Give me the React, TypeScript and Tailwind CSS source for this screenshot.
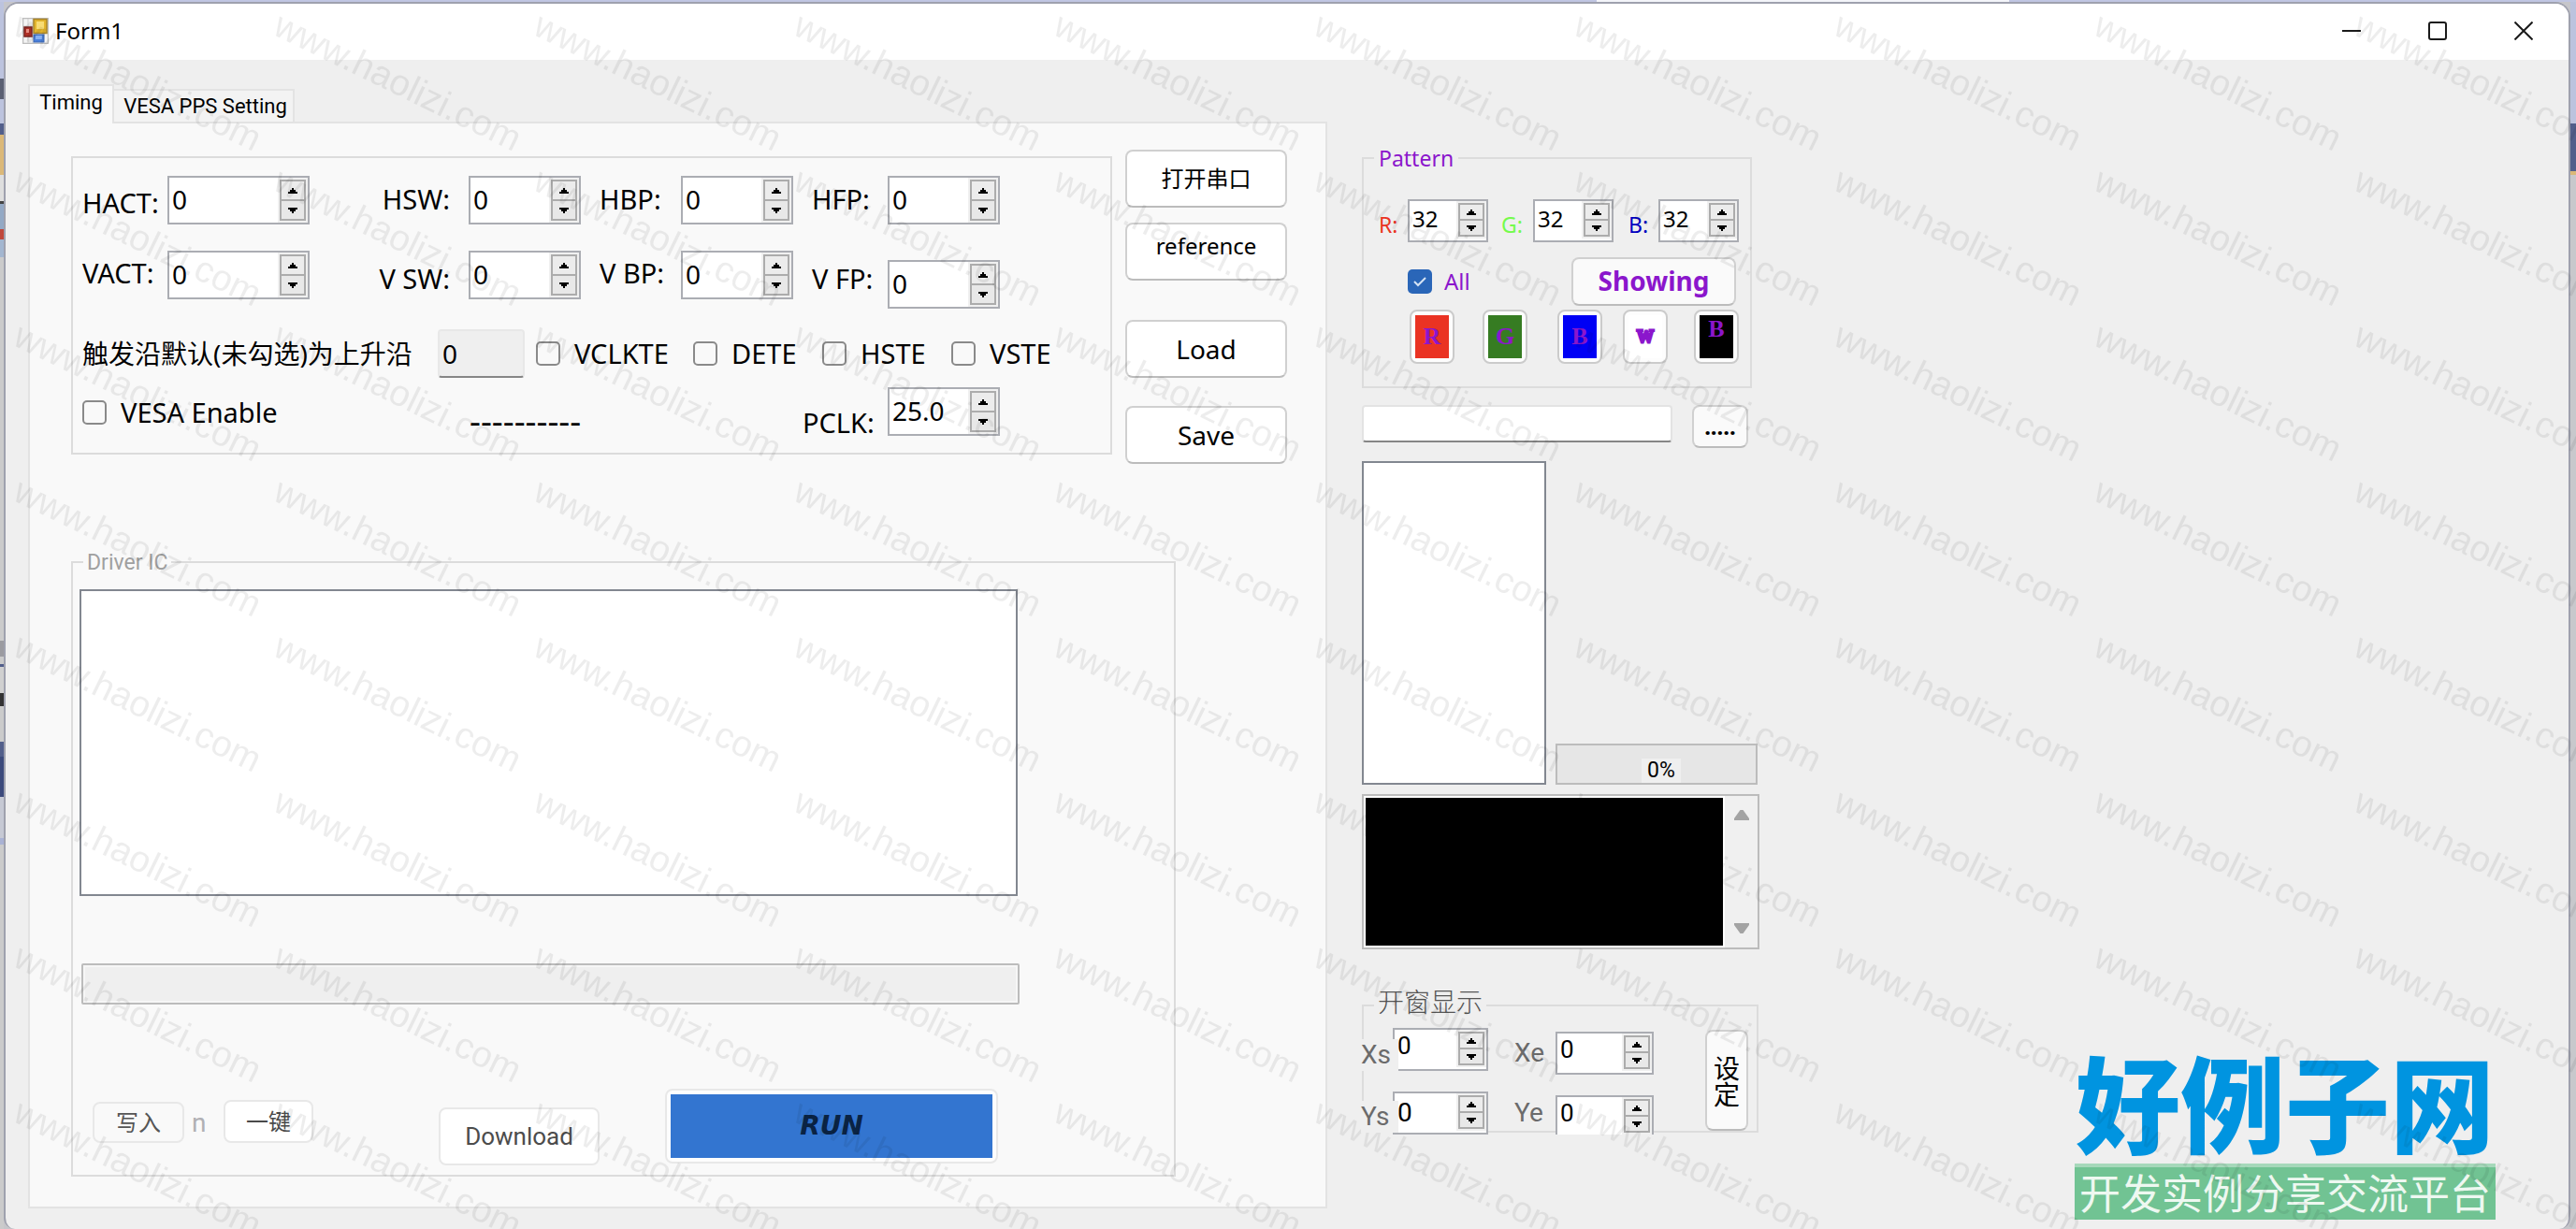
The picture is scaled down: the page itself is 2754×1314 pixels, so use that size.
import React from "react";

const FORM_FONT = "font-['Noto_Sans','Noto_Sans_CJK_SC',sans-serif]";

function Arrow({ down }: { down?: boolean }) {
  return (
    <svg viewBox="0 0 10 6" className="h-[6px] w-[10px]" aria-hidden="true" shapeRendering="crispEdges">
      <path d={down ? "M0 0h10v2h-2v2h-2v2h-2v-2h-2v-2h-2z" : "M0 6h10v-2h-2v-2h-2v-2h-2v2h-2v2h-2z"} fill="#000" />
    </svg>
  );
}

function Spinner({
  id,
  value,
  small,
  className,
  inputClass,
}: {
  id: string;
  value: string;
  small?: boolean;
  className: string;
  inputClass?: string;
}) {
  return (
    <div
      className={`flex shrink-0 border-2 border-[#abadb3] bg-white ${small ? "h-[46px]" : "h-[52px]"} ${className}`}
    >
      <input
        id={id}
        type="text"
        defaultValue={value}
        className={`w-0 min-w-0 flex-1 bg-transparent pl-[3px] text-black outline-none ${
          inputClass ?? (small ? "pb-1 text-[24px]" : "pb-0.5 text-[28px]")
        }`}
      />
      <div className={`flex w-8 shrink-0 flex-col bg-[#f0f0f0] px-0.5 pt-0.5 pb-0.5 ${small ? "mb-0.5" : ""}`}>
        <button
          type="button"
          aria-label={`${id} up`}
          className="flex flex-1 items-center justify-center border-2 border-[#acacac] bg-[#ececec]"
        >
          <Arrow />
        </button>
        <button
          type="button"
          aria-label={`${id} down`}
          className="flex flex-1 items-center justify-center border-2 border-t-0 border-[#acacac] bg-[#e8e8e8]"
        >
          <Arrow down />
        </button>
      </div>
    </div>
  );
}

function Label({ htmlFor, children }: { htmlFor: string; children: React.ReactNode }) {
  return (
    <label htmlFor={htmlFor} className="text-[29px] leading-10 whitespace-nowrap">
      {children}
    </label>
  );
}

function Check({ id, label, className }: { id: string; label: string; className?: string }) {
  return (
    <div className={`flex items-center gap-[15px] ${className ?? ""}`}>
      <input
        id={id}
        type="checkbox"
        className="size-[26px] shrink-0 appearance-none rounded-[5px] border-2 border-[#8a8a8a] bg-[#f9f9f9]"
      />
      <Label htmlFor={id}>{label}</Label>
    </div>
  );
}

function PushButton({ className, children }: { className: string; children: React.ReactNode }) {
  return (
    <button
      type="button"
      className={`flex shrink-0 items-center justify-center rounded-lg border-2 border-[#d0d0d0] border-b-[#bcbcbc] ${className}`}
    >
      {children}
    </button>
  );
}

function Swatch({
  label,
  color,
  className,
  textClass,
}: {
  label: string;
  color: string;
  className?: string;
  textClass?: string;
}) {
  return (
    <button
      type="button"
      className={`flex h-[58px] w-12 shrink-0 rounded-lg border-2 border-[#cbcbcb] bg-[#fdfdfd] p-1 ${className ?? ""}`}
    >
      <span
        className={`flex flex-1 justify-center self-stretch overflow-hidden font-['Liberation_Serif',serif] leading-[30px] font-bold text-[#8b16cc] ${color} ${
          textClass ?? "items-center text-[26px]"
        }`}
      >
        {label}
      </span>
    </button>
  );
}

function FormIcon() {
  return (
    <svg viewBox="0 0 28 28" className="size-7" aria-hidden="true">
      <rect x="0.5" y="0.5" width="27" height="27" fill="#f4f4f4" stroke="#bdbdbd" strokeWidth="1.5" />
      <path d="M11 1v26M1 9h10M1 20h10M6 20v7M6 1v8" stroke="#cfcfcf" strokeWidth="1" />
      <rect x="12" y="1.5" width="14" height="15" fill="#e3b52d" stroke="#a8842a" strokeWidth="1.5" />
      <rect x="15" y="4" width="8" height="8" fill="#f8dc75" />
      <rect x="2" y="10" width="8" height="10" fill="#b02f26" stroke="#7c2420" strokeWidth="1.5" />
      <rect x="4" y="12" width="3" height="4" fill="#e58b80" />
      <rect x="12" y="18" width="11" height="8" fill="#4a80dc" stroke="#3d66b0" strokeWidth="1" />
      <rect x="14" y="19" width="7" height="4" fill="#86b0f2" />
    </svg>
  );
}

function Watermark() {
  return (
    <svg className="pointer-events-none absolute inset-0 h-full w-full" aria-hidden="true">
      <defs>
        <pattern id="wm" width="278" height="166" patternUnits="userSpaceOnUse">
          <text
            x="12"
            y="36"
            transform="rotate(26 12 36)"
            fontSize="39"
            fill="#000"
            fillOpacity="0.07"
            className="font-['Liberation_Sans',Arial,sans-serif]"
          >
            www.haolizi.com
          </text>
        </pattern>
      </defs>
      <rect width="100%" height="100%" fill="url(#wm)" />
    </svg>
  );
}

function TimingGroup() {
  return (
    <section className="mt-[7px] w-[1113px] shrink-0 border-2 border-[#dcdcdc] pt-[19px] pb-3 pl-[10px]">
      <div className="flex items-start">
        <div className="flex w-[91px] flex-col gap-[35px] pt-[9px]">
          <Label htmlFor="hact">HACT:</Label>
          <Label htmlFor="vact">VACT:</Label>
        </div>
        <div className="flex flex-col gap-7">
          <Spinner id="hact" value="0" className="w-[152px]" />
          <Spinner id="vact" value="0" className="w-[152px]" />
        </div>
        <div className="flex w-[170px] flex-col gap-[45px] pt-[5px] pr-5 text-right">
          <Label htmlFor="hsw">HSW:</Label>
          <Label htmlFor="vsw">V SW:</Label>
        </div>
        <div className="flex flex-col gap-7">
          <Spinner id="hsw" value="0" className="w-[120px]" />
          <Spinner id="vsw" value="0" className="w-[120px]" />
        </div>
        <div className="flex w-[107px] flex-col gap-[39px] pt-[5px] pl-5">
          <Label htmlFor="hbp">HBP:</Label>
          <Label htmlFor="vbp">V BP:</Label>
        </div>
        <div className="flex flex-col gap-7">
          <Spinner id="hbp" value="0" className="w-[120px]" />
          <Spinner id="vbp" value="0" className="w-[120px]" />
        </div>
        <div className="flex w-[101px] flex-col gap-[45px] pt-[5px] pl-5">
          <Label htmlFor="hfp">HFP:</Label>
          <Label htmlFor="vfp">V FP:</Label>
        </div>
        <div className="flex flex-col gap-[38px]">
          <Spinner id="hfp" value="0" className="w-[120px]" />
          <Spinner id="vfp" value="0" className="w-[120px]" />
        </div>
      </div>

      <div className="mt-[22px] flex items-center">
        <label htmlFor="edge" className="w-[380px] text-[28px] leading-10 whitespace-nowrap">
          触发沿默认(未勾选)为上升沿
        </label>
        <input
          id="edge"
          type="text"
          readOnly
          value="0"
          className="h-[52px] w-[93px] rounded-sm border-2 border-[#e8e8e8] border-b-[#868686] bg-[#efefef] pl-[3px] text-[28px] outline-none"
        />
        <Check id="vclkte" label="VCLKTE" className="ml-3 w-[168px]" />
        <Check id="dete" label="DETE" className="w-[138px]" />
        <Check id="hste" label="HSTE" className="w-[138px]" />
        <Check id="vste" label="VSTE" />
      </div>

      <div className="mt-[10px] flex items-start">
        <Check id="vesa" label="VESA Enable" className="w-[414px] pt-[7px]" />
        <span className="w-[356px] pt-[15px] text-[37px] leading-10">----------</span>
        <div className="w-[91px] pt-[18px] leading-[0]">
          <Label htmlFor="pclk">PCLK:</Label>
        </div>
        <Spinner id="pclk" value="25.0" className="w-[120px]" />
      </div>
    </section>
  );
}

function DriverGroup() {
  return (
    <fieldset className="mt-[89px] w-[1181px] border-2 border-[#dcdcdc] pb-[10px] pl-[7px]">
      <legend className="ml-1 px-1 pt-0.5 font-['Roboto',sans-serif] text-[23px] leading-[30px] text-[#a0a0a0]">
        Driver IC
      </legend>
      <div
        role="listbox"
        aria-label="Driver IC log"
        className="mt-[13px] h-[328px] w-[1003px] border-2 border-[#828790] bg-white"
      />
      <div
        role="progressbar"
        aria-label="Driver IC progress"
        aria-valuenow={0}
        className="mt-[72px] ml-0.5 h-11 w-[1003px] rounded-xs border-2 border-[#bcbcbc] bg-[#efefef] ring-2 ring-[#f6f6f6] ring-inset"
      />
      <div className="mt-[90px] flex items-start pl-[14px]">
        <PushButton className="mt-[14px] h-11 w-[98px] border-[#e8e8e8]! text-[24px] leading-8 text-[#555]">写入</PushButton>
        <span className="mt-[16px] w-[42px] pl-2 font-['Roboto',sans-serif] text-[28px] leading-[42px] text-[#b0b0b4]">n</span>
        <PushButton className="mt-3 h-[46px] w-24 border-[#e8e8e8]! bg-white text-[24px] leading-8 text-[#4a4a4a]">
          一键
        </PushButton>
        <PushButton className="mt-5 ml-[134px] h-[62px] w-[172px] border-[#e8e8e8]! bg-white font-['Roboto',sans-serif] text-[26px] text-[#4c4c4c]">
          Download
        </PushButton>
        <button type="button" className="ml-[70px] flex h-20 w-[356px] rounded-lg border-2 border-[#e8e8e8] bg-[#fdfdfd] p-1">
          <span className="flex flex-1 items-center justify-center self-stretch bg-[#3375d0] font-['DejaVu_Sans',sans-serif] text-[28px] font-bold text-[#0a2344] italic">
            RUN
          </span>
        </button>
      </div>
    </fieldset>
  );
}

function PatternGroup() {
  return (
    <fieldset className="w-[417px] border-2 border-[#dcdcdc] pb-6">
      <legend className="ml-[11px] px-[5px] text-[23px] leading-8 text-[#8b16cc]">Pattern</legend>
      <div className="flex items-start pt-7 pl-4 text-[23px] leading-8">
        <label htmlFor="r" className="w-[31px] pt-[11px] text-[#ea3323]">R:</label>
        <Spinner id="r" value="32" small className="w-[86px]" />
        <label htmlFor="g" className="w-12 pt-[11px] pl-[14px] text-[#75fb4c]">G:</label>
        <Spinner id="g" value="32" small className="w-[86px]" />
        <label htmlFor="b" className="w-12 pt-[11px] pl-4 text-[#0000c0]">B:</label>
        <Spinner id="b" value="32" small className="w-[86px]" />
      </div>
      <div className="mt-4 flex items-center pr-[15px] pl-[47px]">
        <span className="relative flex size-[26px]">
          <input id="all" type="checkbox" defaultChecked className="size-[26px] appearance-none rounded-[5px] bg-[#2a66b8]" />
          <svg viewBox="0 0 26 26" className="pointer-events-none absolute inset-0" aria-hidden="true">
            <path d="M7 13l4 4 8-8" fill="none" stroke="#d5e3f4" strokeWidth="2" />
          </svg>
        </span>
        <label htmlFor="all" className="pl-[13px] text-[24px] leading-8 text-[#8b16cc]">All</label>
        <PushButton className="ml-auto h-[52px] w-44 bg-[#fafafa] pb-0.5 text-[28px] leading-9 font-bold text-[#8b16cc]">
          Showing
        </PushButton>
      </div>
      <div className="mt-1 flex pl-[49px]">
        <Swatch label="R" color="bg-[#ea3323]" />
        <Swatch label="G" color="bg-[#367c22]" className="ml-[30px]" />
        <Swatch label="B" color="bg-[#0000f5]" className="ml-8" />
        <Swatch
          label="W"
          color="bg-white"
          className="ml-[22px]"
          textClass="items-center text-[18px] [-webkit-text-stroke:3px_#8b16cc]"
        />
        <Swatch label="B" color="bg-black" className="ml-7" textClass="items-start text-[26px]" />
      </div>
    </fieldset>
  );
}

function WindowGroup() {
  return (
    <fieldset className="mt-[38px] h-[158px] w-[424px] border-2 border-[#dcdcdc]">
      <legend className="ml-[11px] px-1 pb-2 text-[28px] leading-9 font-light text-[#555]">开窗显示</legend>
      <div className="-mt-1 -ml-[3px] flex items-start font-['Roboto',sans-serif] text-[28px] leading-[34px] text-[#6b6b6b]">
        <div className="z-10 -mr-[6px] flex w-10 flex-col gap-8 pt-[18px]">
          <label htmlFor="xs" className="bg-[#efefef]">Xs</label>
          <label htmlFor="ys" className="bg-[#efefef]">Ys</label>
        </div>
        <div className="flex flex-col gap-[22px] pt-[6px]">
          <Spinner id="xs" value="0" small className="w-[102px]" inputClass="pb-2 text-[26px]" />
          <Spinner id="ys" value="0" small className="w-[102px]" inputClass="text-[28px]" />
        </div>
        <div className="flex w-[72px] flex-col gap-[30px] pt-4 pl-7">
          <label htmlFor="xe">Xe</label>
          <label htmlFor="ye">Ye</label>
        </div>
        <div className="flex h-[120px] flex-col gap-[22px] overflow-hidden pt-[10px]">
          <Spinner id="xe" value="0" small className="w-[105px]" inputClass="pb-2 text-[26px]" />
          <Spinner id="ye" value="0" small className="w-[105px]" inputClass="pb-2 text-[26px]" />
        </div>
        <PushButton className="mt-2 ml-[55px] h-[108px] w-[46px] bg-[#fafafa] px-1 font-['Noto_Sans_CJK_SC',sans-serif] text-[28px] leading-7 text-black">
          <span className="w-7">设定</span>
        </PushButton>
      </div>
    </fieldset>
  );
}

function SidePanel() {
  return (
    <div className="ml-[37px] flex w-[425px] shrink-0 flex-col pt-[89px]">
      <PatternGroup />
      <div className="mt-[18px] flex items-start">
        <input
          type="text"
          aria-label="File path"
          className="h-10 w-[332px] rounded-sm border-2 border-[#e3e3e3] border-b-[#868686] bg-white px-1 text-[22px] outline-none"
        />
        <PushButton className="ml-[21px] h-[46px] w-[60px] bg-[#fafafa] text-[24px] leading-8 font-bold">.....</PushButton>
      </div>
      <div className="mt-[14px] flex items-end gap-[10px]">
        <div role="listbox" aria-label="Files" className="h-[346px] w-[197px] border-2 border-[#828790] bg-white" />
        <div
          role="progressbar"
          aria-label="Transfer progress"
          aria-valuenow={0}
          className="flex h-11 w-[216px] items-end justify-center border-2 border-[#bcbcbc] bg-[#e6e6e6] pl-[10px]"
        >
          <span className="bg-[#efefef] px-[6px] font-['Roboto',sans-serif] text-[23px] leading-[26px]">0%</span>
        </div>
      </div>
      <div className="mt-[10px] flex h-[166px] border-2 border-[#bcbcbc] bg-white p-0.5">
        <textarea aria-label="Console" className="min-w-0 flex-1 resize-none bg-black p-1 text-[22px] text-white outline-none" />
        <div className="-my-0.5 -mr-0.5 ml-0.5 flex w-[35px] flex-col items-center justify-between bg-[#f0f0f0] py-[14px]">
          <svg viewBox="0 0 16 12" className="h-3 w-4" aria-hidden="true">
            <path d="M6.5 1h3L16 10v2H0v-2z" fill="#a3a3a3" />
          </svg>
          <svg viewBox="0 0 16 12" className="h-3 w-4" aria-hidden="true">
            <path d="M6.5 11h3L16 2V0H0v2z" fill="#a3a3a3" />
          </svg>
        </div>
      </div>
      <WindowGroup />
    </div>
  );
}

function SiteLogo() {
  return (
    <div className="mr-[78px] mb-[10px] ml-auto flex w-[450px] flex-col self-end font-['Noto_Sans_CJK_SC',sans-serif]">
      <div className="pb-2 text-center text-[112px] leading-[120px] font-black whitespace-nowrap text-[#0094e0]">
        好例子网
      </div>
      <div className="border-t-4 border-[#a6d8ba] bg-[#71c393] pb-1 text-center text-[44px] leading-[52px] whitespace-nowrap text-[#eef8f1]">
        开发实例分享交流平台
      </div>
    </div>
  );
}

export default function App() {
  return (
    <div className={`relative flex min-h-screen flex-col overflow-hidden bg-[#c6c6ca] text-black ${FORM_FONT}`}>
      <div className="flex h-0.5 bg-[#c0c6e2]">
        <div className="ml-[62%] w-[16%] bg-[#f4f5fa]" />
      </div>
      <div className="flex flex-1">
        <div className="flex w-1 shrink-0 flex-col">
          <div className="h-[82px] bg-[#bcc3de]" />
          <div className="h-[22px] bg-[#5a5f72]" />
          <div className="h-[26px] bg-[#bcc3de]" />
          <div className="h-3 bg-[#525f8b]" />
          <div className="h-[43px] bg-[#dbb878]" />
          <div className="h-[28px] bg-[#dedede]" />
          <div className="h-[3px] bg-[#444]" />
          <div className="h-[27px] bg-[#93a9c5]" />
          <div className="h-[11px] bg-[#c0483c]" />
          <div className="h-[19px] bg-[#a3b6d0]" />
          <div className="h-[410px] bg-[#cbcbcb]" />
          <div className="h-[17px] bg-[#9b9ba0]" />
          <div className="h-2 bg-[#cbcbcb]" />
          <div className="h-[3px] bg-[#525f8b]" />
          <div className="h-7 bg-[#d0d0d0]" />
          <div className="h-[14px] bg-[#333]" />
          <div className="h-[38px] bg-[#cbcbcb]" />
          <div className="h-4 bg-[#525f8b]" />
          <div className="h-[43px] bg-[#3c4a7c]" />
          <div className="h-11 bg-[#c6c9d4]" />
          <div className="h-[7px] bg-[#a9b2d4]" />
          <div className="flex-1 bg-[#cbcbcb]" />
        </div>

        <main className="flex min-w-0 flex-1 flex-col overflow-hidden rounded-t-2xl rounded-b-xl border-2 border-b-0 border-[#9fa1ae] bg-[#efefef]">
          <header className="flex h-[60px] items-center bg-white pr-0.5 pb-0.5 pl-[18px]">
            <FormIcon />
            <h1 className="ml-[7px] text-[24px] leading-8">Form1</h1>
            <div className="ml-auto flex h-full text-[#1a1a1a]">
              <button type="button" aria-label="Minimize" className="flex w-[92px] items-center justify-center">
                <svg viewBox="0 0 20 20" className="size-5" aria-hidden="true">
                  <path d="M0 10h20" stroke="currentColor" strokeWidth="2" />
                </svg>
              </button>
              <button type="button" aria-label="Maximize" className="flex w-[92px] items-center justify-center">
                <svg viewBox="0 0 20 20" className="size-5" aria-hidden="true">
                  <rect x="1" y="1" width="18" height="18" rx="2" fill="none" stroke="currentColor" strokeWidth="2" />
                </svg>
              </button>
              <button type="button" aria-label="Close" className="flex w-[92px] items-center justify-center">
                <svg viewBox="0 0 20 20" className="size-5" aria-hidden="true">
                  <path d="M0.5 0.5l19 19M19.5 0.5l-19 19" stroke="currentColor" strokeWidth="2" />
                </svg>
              </button>
            </div>
          </header>

          <div className="flex flex-1 items-start pl-6">
            <div className="mb-[22px] flex w-[1389px] shrink-0 flex-col pt-[26px]">
              <div role="tablist" className="flex items-end font-['Roboto',sans-serif] text-[22px] leading-7">
                <button
                  type="button"
                  role="tab"
                  aria-selected="true"
                  className="z-10 -mb-0.5 h-[42px] w-[92px] border-2 border-b-0 border-[#e3e3e3] bg-[#f9f9f9] pb-1"
                >
                  Timing
                </button>
                <button
                  type="button"
                  role="tab"
                  aria-selected="false"
                  className="h-[35px] w-[193px] border-2 border-b-0 border-l-0 border-[#e3e3e3] bg-[#f3f3f3] pl-1 whitespace-nowrap"
                >
                  VESA PPS Setting
                </button>
              </div>
              <div role="tabpanel" className="border-2 border-[#e3e3e3] bg-[#f9f9f9] pt-7 pb-8 pl-11">
                <div className="flex items-start">
                  <TimingGroup />
                  <div className="ml-[14px] flex flex-col">
                    <PushButton className="h-[62px] w-[173px] bg-white text-[24px] leading-8">打开串口</PushButton>
                    <PushButton className="mt-4 h-[62px] w-[173px] bg-white pb-3 text-[24px] leading-8">reference</PushButton>
                    <PushButton className="mt-[42px] h-[62px] w-[173px] bg-white text-[28px] leading-9">Load</PushButton>
                    <PushButton className="mt-[30px] h-[62px] w-[173px] bg-white text-[28px] leading-9">Save</PushButton>
                  </div>
                </div>
                <DriverGroup />
              </div>
            </div>
            <SidePanel />
            <SiteLogo />
          </div>
        </main>

        <div className="flex w-1.5 shrink-0 flex-col">
          <div className="h-[130px] bg-[#bcc3de]" />
          <div className="h-[51px] bg-[#525f8b]" />
          <div className="h-1 bg-[#dbb878]" />
          <div className="flex-1 bg-[#c8c8cc]" />
        </div>
      </div>
      <Watermark />
    </div>
  );
}
